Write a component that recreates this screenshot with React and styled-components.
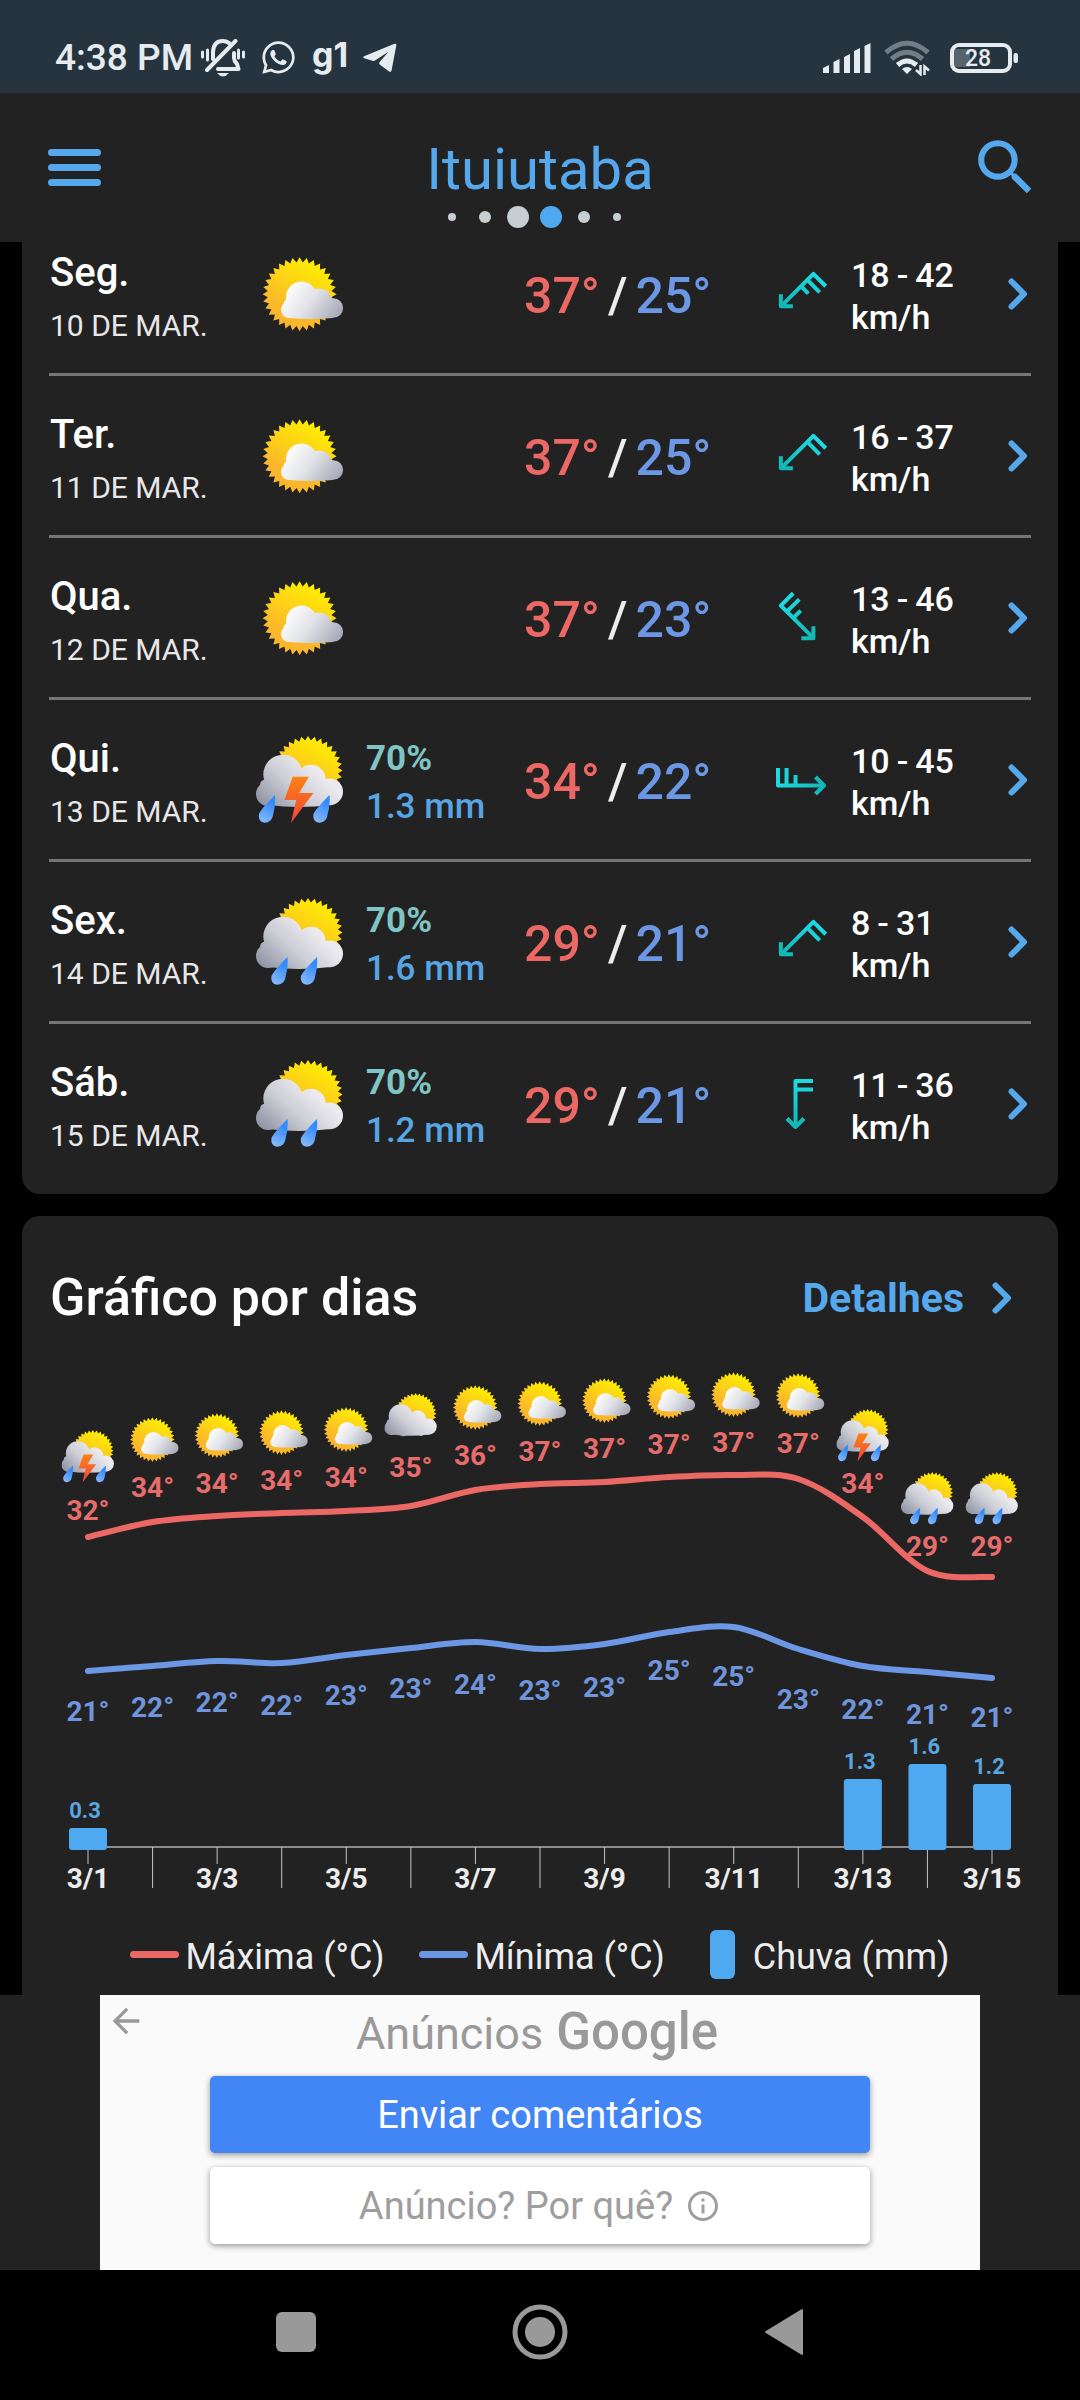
import React from 'react';
import styled, { createGlobalStyle } from 'styled-components';
import { FaWhatsapp } from 'react-icons/fa';
import { MdSearch, MdArrowBack, MdInfoOutline } from 'react-icons/md';

const GlobalStyle = createGlobalStyle`
  * {
    box-sizing: border-box;
  }

  body {
    margin: 0;
    background: #000;
    color: #fff;
    font-family: Roboto, 'Liberation Sans', sans-serif;
  }

  h1, h2, p, ul {
    margin: 0;
    padding: 0;
  }

  button {
    border: 0;
    padding: 0;
    background: none;
    font: inherit;
    color: inherit;
    cursor: pointer;
  }

  a {
    color: inherit;
    text-decoration: none;
  }

  svg {
    display: block;
    flex-shrink: 0;
  }
`;

const BLUE = '#55a8ec';
const RED = '#ec6864';
const INDIGO = '#6c97e4';

const Screen = styled.div`
  display: flex;
  flex-direction: column;
  height: 100vh;
`;

/* ---------- status bar ---------- */

const StatusBar = styled.div`
  display: flex;
  align-items: center;
  justify-content: space-between;
  height: 93px;
  padding: 22px 62px 0 55px;
  background: #26343f;
  color: #e6ebef;
`;

const StatusGroup = styled.div`
  display: flex;
  align-items: center;
  gap: ${({ $gap }) => $gap}px;
`;

const Clock = styled.span`
  font-size: 37px;
  font-weight: 500;
  line-height: 42px;
`;

const NewsBadge = styled.span`
  font-family: Inter, Roboto, sans-serif;
  font-size: 34px;
  font-weight: 700;
  line-height: 32px;
  padding-bottom: 6px;
`;

/* ---------- header ---------- */

const Header = styled.header`
  display: grid;
  grid-template-columns: 1fr auto 1fr;
  align-items: center;
  height: 149px;
  padding: 0 38px;
  background: #222;
  color: ${BLUE};
`;

const MenuButton = styled.button`
  display: flex;
  flex-direction: column;
  justify-self: start;
  gap: 8px;
  padding: 0 10px;
`;

const MenuLine = styled.span`
  width: 53px;
  height: 7px;
  border-radius: 4px;
  background: ${BLUE};
`;

const City = styled.div`
  display: flex;
  flex-direction: column;
  align-items: center;
  gap: 3px;
  padding-top: 28px;
`;

const CityName = styled.h1`
  font-size: 58px;
  font-weight: 400;
  line-height: 68px;
`;

const Dots = styled.div`
  display: flex;
  align-items: center;
  height: 22px;
  padding-right: 10px;
`;

const DotSlot = styled.span`
  display: flex;
  justify-content: center;
  width: 33px;
`;

const Dot = styled.span`
  width: ${({ $size }) => $size}px;
  height: ${({ $size }) => $size}px;
  border-radius: 50%;
  background: ${({ $active }) => ($active ? '#4fa9f0' : '#c7ced2')};
`;

const SearchButton = styled.button`
  justify-self: end;
`;

/* ---------- content ---------- */

const Content = styled.main`
  flex: 1;
  min-height: 0;
  padding: 0 22px;
  overflow-y: auto;
  scrollbar-width: none;
`;

const Card = styled.section`
  padding: 0 27px;
  border-radius: 18px;
  background: #222;
`;

/* the list is scrolled a little under the header */
const DaysCard = styled(Card)`
  margin-top: -28px;
  padding-bottom: 11px;
`;

const DayList = styled.ul`
  list-style: none;
`;

const DayItem = styled.li`
  border-bottom: 3px solid #757575;

  &:last-child {
    border-bottom: 0;
  }
`;

const DayRow = styled.a`
  display: grid;
  grid-template-columns: 206px 110px 158px 1fr 75px 157px 20px;
  align-items: center;
  height: 159px;
  padding: 0 3px 0 1px;
`;

const Cell = styled.div`
  padding-top: 6px;
`;

const DayName = styled.p`
  font-size: 40px;
  font-weight: 500;
  line-height: 50px;
  margin-bottom: 8px;
`;

const DayDate = styled.p`
  font-size: 30px;
  line-height: 40px;
  color: #e8e8e8;
`;

const Rain = styled.p`
  font-size: 35px;
  font-weight: ${({ $bold }) => ($bold ? 700 : 500)};
  line-height: 48px;
  color: ${({ $color }) => $color};
`;

const Temps = styled(Cell)`
  display: flex;
  gap: 8px;
  font-size: 50px;
  font-weight: 500;
  line-height: 61px;
  color: #ededed;
`;

const Temp = styled.span`
  color: ${({ $color }) => $color};
`;

const Wind = styled.div`
  padding-top: 4px;
  font-size: 34px;
  font-weight: 500;
  line-height: 42px;
`;

const WindRange = styled.p`
  display: flex;
  gap: 7px;
`;

/* ---------- chart ---------- */

const ChartCard = styled(Card)`
  margin-top: 22px;
  padding-top: 51px;
  padding-bottom: 51px;
`;

const ChartHeader = styled.div`
  display: flex;
  align-items: center;
  justify-content: space-between;
  padding: 0 19px 0 1px;
`;

const ChartTitle = styled.h2`
  font-size: 52px;
  font-weight: 500;
  line-height: 61px;
`;

const Details = styled.a`
  display: flex;
  align-items: center;
  gap: 28px;
  font-size: 41px;
  font-weight: 700;
  line-height: 46px;
  color: ${BLUE};
`;

const ChartSvg = styled.svg`
  width: 100%;
  font-weight: 700;
`;

const Legend = styled.div`
  display: flex;
  align-items: center;
  justify-content: center;
  gap: 35px;
  margin-top: 30px;
`;

const LegendItem = styled.div`
  display: flex;
  align-items: center;
  gap: ${({ $gap }) => $gap}px;
`;

const LegendText = styled.span`
  padding-top: 6px;
  font-size: 36px;
  line-height: 43px;
  color: #ededed;
`;

const LegendLine = styled.span`
  width: 49px;
  height: 7px;
  border-radius: 4px;
  background: ${({ $color }) => $color};
`;

const LegendBar = styled.span`
  width: 25px;
  height: 49px;
  margin-left: 10px;
  border-radius: 6px;
  background: #4fa9f0;
`;

/* ---------- ad ---------- */

const AdStrip = styled.aside`
  display: flex;
  justify-content: center;
  background: #222;
`;

const Ad = styled.div`
  display: grid;
  grid-template-columns: 110px 660px 110px;
  align-items: start;
  height: 275px;
  background: #fafafa;
  color: #999;
`;

const AdBack = styled.button`
  justify-self: start;
  padding: 6px;
`;

const AdBody = styled.div`
  display: flex;
  flex-direction: column;
  gap: 14px;
`;

const AdTitle = styled.p`
  display: flex;
  align-items: baseline;
  justify-content: center;
  gap: 13px;
  height: 67px;
  padding-right: 6px;
  font-size: 45px;
  line-height: 74px;
`;

const AdBrand = styled.span`
  font-size: 51px;
  font-weight: 500;
`;

const AdButton = styled.button`
  display: flex;
  align-items: center;
  justify-content: center;
  gap: 12px;
  height: 77px;
  border-radius: 5px;
  font-size: 38px;
  background: ${({ $primary }) => ($primary ? '#4285f4' : '#fff')};
  color: ${({ $primary }) => ($primary ? '#fff' : '#9e9e9e')};
  box-shadow: 0 2px 6px rgba(0, 0, 0, 0.4);
`;

/* ---------- system nav ---------- */

const NavBar = styled.nav`
  display: flex;
  align-items: center;
  justify-content: center;
  gap: 188px;
  height: 130px;
  padding-bottom: 6px;
  background: #000;
`;

/* ---------- icons ---------- */

function spikes(cx, cy, outer, inner, count) {
  const points = [];
  for (let i = 0; i < count * 2; i += 1) {
    const r = i % 2 ? inner : outer;
    const a = (Math.PI * i) / count - Math.PI / 2;
    points.push(`${(cx + r * Math.cos(a)).toFixed(1)},${(cy + r * Math.sin(a)).toFixed(1)}`);
  }
  return points.join(' ');
}

function IconGradients() {
  return (
    <svg width="0" height="0" aria-hidden="true">
      <defs>
        <linearGradient id="sun" x1="0.75" y1="0.05" x2="0.4" y2="0.75">
          <stop offset="0" stopColor="#fff000" />
          <stop offset="1" stopColor="#fab72b" />
        </linearGradient>
        <linearGradient id="cloudLight" gradientUnits="userSpaceOnUse" x1="36" y1="38" x2="82" y2="70">
          <stop offset="0" stopColor="#fafafa" />
          <stop offset="0.4" stopColor="#e2e3e8" />
          <stop offset="1" stopColor="#a3a7b5" />
        </linearGradient>
        <linearGradient id="cloudDark" gradientUnits="userSpaceOnUse" x1="56" y1="30" x2="14" y2="76">
          <stop offset="0" stopColor="#ebebef" />
          <stop offset="0.45" stopColor="#cdced6" />
          <stop offset="1" stopColor="#8f94a4" />
        </linearGradient>
        <linearGradient id="drop" x1="0.6" y1="0.2" x2="0.3" y2="1">
          <stop offset="0" stopColor="#338bfb" />
          <stop offset="1" stopColor="#86b9fb" />
        </linearGradient>
        <linearGradient id="bolt" x1="0.5" y1="0" x2="0.5" y2="1">
          <stop offset="0" stopColor="#fb8312" />
          <stop offset="1" stopColor="#f5413c" />
        </linearGradient>
        <linearGradient id="wind" gradientUnits="userSpaceOnUse" x1="0" y1="0" x2="0" y2="50">
          <stop offset="0" stopColor="#1ddbe4" />
          <stop offset="1" stopColor="#12b5b4" />
        </linearGradient>
      </defs>
    </svg>
  );
}

function Drop({ x }) {
  // tip at (x, 59)
  return (
    <path
      d={`M${x} 59 Q${x - 14} 73 ${x - 16} 78 C${x - 18} 90 ${x - 3} 89 ${x - 2} 79 Q${x + 1} 68 ${x} 59 Z`}
      fill="url(#drop)"
    />
  );
}

function WeatherIcon({ type, size = 88, ...rest }) {
  if (type === 'sun') {
    return (
      <svg viewBox="0 0 88 88" width={size} height={size} {...rest}>
        <polygon points={spikes(43.6, 44.2, 37, 32, 32)} fill="url(#sun)" />
        <g fill="url(#cloudLight)">
          <path d="M33 52 H77 V68 Q55 70 33 68 Z" />
          <circle cx="45.5" cy="47" r="15.5" />
          <circle cx="63" cy="51.5" r="13" />
          <circle cx="77.3" cy="58" r="9.8" />
          <circle cx="33" cy="60" r="8" />
          <circle cx="32" cy="54" r="4.5" />
        </g>
      </svg>
    );
  }
  return (
    <svg viewBox="0 0 88 88" width={size} height={size} {...rest}>
      <polygon points={spikes(52, 34.5, 34.5, 30, 32)} fill="url(#sun)" />
      <g fill="url(#cloudDark)">
        <path d="M12 44 H74 V69 Q43 73 12 69 Z" />
        <circle cx="27" cy="38.5" r="19.7" />
        <circle cx="55" cy="43.4" r="14.7" />
        <circle cx="73.6" cy="55.8" r="13.4" />
        <circle cx="12" cy="58" r="12" />
        <circle cx="9.5" cy="49" r="5.5" />
      </g>
      {type === 'cloud' && (
        <g fill="url(#cloudDark)">
          <circle cx="32" cy="64" r="8" />
          <circle cx="61" cy="64" r="7" />
        </g>
      )}
      {type === 'storm' && (
        <>
          <Drop x={19} />
          <Drop x={73.5} />
          <path d="M36.7 40.7 H53 L43 57 H57.4 L35 87 L40.1 64 H28.4 Z" fill="url(#bolt)" />
        </>
      )}
      {type === 'rain' && (
        <>
          <Drop x={31.5} />
          <Drop x={61} />
        </>
      )}
    </svg>
  );
}

function WindIcon({ angle, barbs }) {
  return (
    <svg viewBox="0 0 50 50" width="50" height="50" overflow="visible">
      <g
        transform={`rotate(${angle} 25 25)`}
        fill="none"
        stroke="url(#wind)"
        strokeWidth="4"
        strokeLinejoin="round"
      >
        <path d="M37 2 H19.5 L19.6 48" />
        <path d="M11 39.5 L19.5 48 L28 39.5" />
        <path d="M19.5 10.5 L37 10.6" />
        {barbs > 2 && <path d="M19.5 19.5 L30 19.6" />}
      </g>
    </svg>
  );
}

function Chevron() {
  return (
    <svg viewBox="0 0 20 32" width="20" height="32">
      <path
        d="M3.5 3.5 L16 16 L3.5 28.5"
        fill="none"
        stroke={BLUE}
        strokeWidth="6"
        strokeLinecap="round"
        strokeLinejoin="round"
      />
    </svg>
  );
}

function MutedBell() {
  return (
    <svg viewBox="0 0 44 38" width="44" height="38" fill="none" stroke="currentColor">
      <path
        d="M12 20 V13 Q12.500 2 22 2 Q25 2 28 4 M33 14 V19 Q33 22 36 25 L37.500 30 H17"
        strokeWidth="4"
        strokeLinecap="round"
        strokeLinejoin="round"
      />
      <path d="M6 31 L34.500 2" strokeWidth="4" strokeLinecap="round" />
      <path d="M1.500 13 V18 M6.500 11 V21 M37.500 11 V19 M42.500 13 V18" strokeWidth="3" strokeLinecap="round" />
      <path d="M16 34 H28 Q22 41 16 34 Z" fill="currentColor" stroke="none" />
    </svg>
  );
}

function Plane() {
  return (
    <svg viewBox="0 0 34 30" width="34" height="30" fill="currentColor">
      <path d="M1 13.200 L31.500 0.800 Q33.600 0.300 33.300 2.400 L28.600 27.200 Q28 29.600 25.800 28.200 L17 21.800 Q15.400 20.400 16.800 18.800 L25.500 8.800 L12 17.400 Q10.800 18.200 9.400 17.800 L1.200 15.300 Q-0.600 14.300 1 13.200 Z" />
    </svg>
  );
}

function Signal() {
  return (
    <svg viewBox="0 0 48 32" width="48" height="32" fill="currentColor">
      <path d="M0 31 V26 L6 23 V31 Z M10.500 31 V20 L16.500 17 V31 Z M21 31 V15 L27 12 V31 Z M31 31 V9 L37 6 V31 Z M41.500 31 V4 L47.500 1 V31 Z" />
    </svg>
  );
}

function Wifi() {
  return (
    <svg viewBox="0 0 46 36" width="46" height="36" fill="none" stroke="currentColor" strokeWidth="5">
      <path d="M2 12.500 Q23 -6 44 12.500" opacity="0.4" />
      <path d="M7.500 19 Q23 5.500 38.500 19" opacity="0.4" />
      <path d="M13.500 25 Q23 17 32.500 25" />
      <path d="M18 29 Q23 25 28 29 L23 34 Z" fill="currentColor" stroke="none" />
      <path d="M36.500 25 V34 L32 30 M40.500 35 V26.500 L45 30.500" strokeWidth="2.500" />
    </svg>
  );
}

function Battery() {
  return (
    <svg viewBox="0 0 68 32" width="68" height="32">
      <rect x="4" y="7" width="16" height="18" fill="#58646d" />
      <rect x="2" y="3" width="58" height="26" rx="7" fill="none" stroke="currentColor" strokeWidth="4" />
      <rect x="63.500" y="11" width="4.500" height="10" rx="2" fill="currentColor" />
      <text x="28" y="24" textAnchor="middle" fontSize="23" fontWeight="500" fill="currentColor">
        28
      </text>
    </svg>
  );
}

/* ---------- data ---------- */

const DAYS = [
  { name: 'Seg.', date: '10 DE MAR.', icon: 'sun', max: 37, min: 25, wind: [18, 42], angle: 45, barbs: 3 },
  { name: 'Ter.', date: '11 DE MAR.', icon: 'sun', max: 37, min: 25, wind: [16, 37], angle: 45, barbs: 2 },
  { name: 'Qua.', date: '12 DE MAR.', icon: 'sun', max: 37, min: 23, wind: [13, 46], angle: -45, barbs: 3 },
  { name: 'Qui.', date: '13 DE MAR.', icon: 'storm', chance: '70%', rain: '1.3 mm', max: 34, min: 22, wind: [10, 45], angle: -90, barbs: 3 },
  { name: 'Sex.', date: '14 DE MAR.', icon: 'rain', chance: '70%', rain: '1.6 mm', max: 29, min: 21, wind: [8, 31], angle: 45, barbs: 2 },
  { name: 'Sáb.', date: '15 DE MAR.', icon: 'rain', chance: '70%', rain: '1.2 mm', max: 29, min: 21, wind: [11, 36], angle: 0, barbs: 2 },
];

// maxY / minY: curve heights, maxLabel / minLabel: text baselines
const POINTS = [
  { icon: 'storm', max: 32, maxY: 209, maxLabel: 192, min: 21, minY: 343, minLabel: 393, rain: '0.3', rainY: 500 },
  { icon: 'sun', max: 34, maxY: 194, maxLabel: 169, min: 22, minY: 338, minLabel: 389 },
  { icon: 'sun', max: 34, maxY: 188, maxLabel: 165, min: 22, minY: 333, minLabel: 384 },
  { icon: 'sun', max: 34, maxY: 185, maxLabel: 162, min: 22, minY: 335, minLabel: 387 },
  { icon: 'sun', max: 34, maxY: 183, maxLabel: 159, min: 23, minY: 327, minLabel: 377 },
  { icon: 'cloud', max: 35, maxY: 178, maxLabel: 149, min: 23, minY: 320, minLabel: 370 },
  { icon: 'sun', max: 36, maxY: 162, maxLabel: 137, min: 24, minY: 314, minLabel: 366 },
  { icon: 'sun', max: 37, maxY: 156, maxLabel: 133, min: 23, minY: 321, minLabel: 372 },
  { icon: 'sun', max: 37, maxY: 154, maxLabel: 130, min: 23, minY: 316, minLabel: 369 },
  { icon: 'sun', max: 37, maxY: 149, maxLabel: 126, min: 25, minY: 304, minLabel: 352 },
  { icon: 'sun', max: 37, maxY: 147, maxLabel: 124, min: 25, minY: 299, minLabel: 358 },
  { icon: 'sun', max: 37, maxY: 151, maxLabel: 125, min: 23, minY: 321, minLabel: 381 },
  { icon: 'storm', max: 34, maxY: 189, maxLabel: 165, min: 22, minY: 338, minLabel: 391, rain: '1.3', rainY: 451 },
  { icon: 'rain', max: 29, maxY: 243, maxLabel: 228, min: 21, minY: 344, minLabel: 396, rain: '1.6', rainY: 436 },
  { icon: 'rain', max: 29, maxY: 249, maxLabel: 228, min: 21, minY: 350, minLabel: 399, rain: '1.2', rainY: 456 },
];

const FIRST_X = 39;
const STEP = 904 / 14;
const AXIS_Y = 519;
const ICON = 53;

const columnX = (i) => FIRST_X + i * STEP;

function smoothPath(ys) {
  const p = ys.map((y, i) => [columnX(i), y]);
  let d = `M${p[0][0]} ${p[0][1]}`;
  for (let i = 0; i < p.length - 1; i += 1) {
    const a = p[i - 1] || p[i];
    const b = p[i];
    const c = p[i + 1];
    const e = p[i + 2] || c;
    d += ` C${b[0] + (c[0] - a[0]) / 6} ${b[1] + (c[1] - a[1]) / 6}`;
    d += ` ${c[0] - (e[0] - b[0]) / 6} ${c[1] - (e[1] - b[1]) / 6} ${c[0]} ${c[1]}`;
  }
  return d;
}

function DaysChart() {
  return (
    <ChartSvg viewBox="0 0 982 572" role="img" aria-label="Gráfico por dias">
      <line x1={FIRST_X} y1={AXIS_Y} x2={columnX(14)} y2={AXIS_Y} stroke="#8c8c8c" strokeWidth="2" />
      {POINTS.map((point, i) => (
        <React.Fragment key={i}>
          <line
            x1={columnX(i)}
            y1={AXIS_Y}
            x2={columnX(i)}
            y2={i % 2 ? 560 : 536}
            stroke="#c4c4c4"
            strokeWidth="1"
          />
          {i % 2 === 0 && (
            <text x={columnX(i)} y="560" textAnchor="middle" fontSize="28" fill="#ededed">
              {`3/${i + 1}`}
            </text>
          )}
          {point.rain && (
            <>
              <rect x={columnX(i) - 19} y={point.rainY} width="38" height={522 - point.rainY} rx="3" fill="#4fa9f0" />
              <text x={columnX(i) - 3} y={point.rainY - 10} textAnchor="middle" fontSize="22" fill="#5aa6e0">
                {point.rain}
              </text>
            </>
          )}
        </React.Fragment>
      ))}
      <g fill="none" strokeWidth="6" strokeLinecap="round">
        <path d={smoothPath(POINTS.map((p) => p.maxY))} stroke={RED} />
        <path d={smoothPath(POINTS.map((p) => p.minY))} stroke={INDIGO} />
      </g>
      {POINTS.map((point, i) => (
        <React.Fragment key={i}>
          <WeatherIcon
            type={point.icon}
            size={ICON}
            x={columnX(i) - ICON / 2}
            y={point.maxLabel - (i === 0 ? 90 : 84)}
          />
          <text x={columnX(i)} y={point.maxLabel} textAnchor="middle" fontSize="28" fill="#e66d6b">
            {point.max}°
          </text>
          <text x={columnX(i)} y={point.minLabel} textAnchor="middle" fontSize="28" fill="#7095dc">
            {point.min}°
          </text>
        </React.Fragment>
      ))}
    </ChartSvg>
  );
}

function Day({ day }) {
  return (
    <DayItem>
      <DayRow href="#">
        <Cell>
          <DayName>{day.name}</DayName>
          <DayDate>{day.date}</DayDate>
        </Cell>
        <WeatherIcon type={day.icon} />
        <Cell>
          {day.chance && (
            <>
              <Rain $bold $color="#80c5c5">{day.chance}</Rain>
              <Rain $color="#58a5e4">{day.rain}</Rain>
            </>
          )}
        </Cell>
        <Temps>
          <Temp $color={RED}>{day.max}°</Temp>
          <span>/</span>
          <Temp $color={INDIGO}>{day.min}°</Temp>
        </Temps>
        <WindIcon angle={day.angle} barbs={day.barbs} />
        <Wind>
          <WindRange>
            <span>{day.wind[0]}</span>
            <span>-</span>
            <span>{day.wind[1]}</span>
          </WindRange>
          <p>km/h</p>
        </Wind>
        <Chevron />
      </DayRow>
    </DayItem>
  );
}

export default function App() {
  return (
    <Screen>
      <GlobalStyle />
      <IconGradients />
      <StatusBar>
        <StatusGroup $gap={15}>
          <StatusGroup $gap={8}>
            <Clock>4:38 PM</Clock>
            <MutedBell />
          </StatusGroup>
          <FaWhatsapp size={37} />
          <NewsBadge>g1</NewsBadge>
          <Plane />
        </StatusGroup>
        <StatusGroup $gap={20}>
          <StatusGroup $gap={13}>
            <Signal />
            <Wifi />
          </StatusGroup>
          <Battery />
        </StatusGroup>
      </StatusBar>

      <Header>
        <MenuButton aria-label="Menu">
          <MenuLine />
          <MenuLine />
          <MenuLine />
        </MenuButton>
        <City>
          <CityName>Ituiutaba</CityName>
          <Dots>
            {[8, 12, 22, 22, 12, 8].map((size, i) => (
              <DotSlot key={i}>
                <Dot $size={size} $active={i === 3} />
              </DotSlot>
            ))}
          </Dots>
        </City>
        <SearchButton aria-label="Buscar">
          <MdSearch size={73} />
        </SearchButton>
      </Header>

      <Content>
        <DaysCard>
          <DayList>
            {DAYS.map((day) => (
              <Day key={day.date} day={day} />
            ))}
          </DayList>
        </DaysCard>

        <ChartCard>
          <ChartHeader>
            <ChartTitle>Gráfico por dias</ChartTitle>
            <Details href="#">
              Detalhes
              <Chevron />
            </Details>
          </ChartHeader>
          <DaysChart />
          <Legend>
            <LegendItem $gap={6}>
              <LegendLine $color={RED} />
              <LegendText>Máxima (°C)</LegendText>
            </LegendItem>
            <LegendItem $gap={6}>
              <LegendLine $color={INDIGO} />
              <LegendText>Mínima (°C)</LegendText>
            </LegendItem>
            <LegendItem $gap={18}>
              <LegendBar />
              <LegendText>Chuva (mm)</LegendText>
            </LegendItem>
          </Legend>
        </ChartCard>
      </Content>

      <AdStrip>
        <Ad>
          <AdBack aria-label="Voltar">
            <MdArrowBack size={40} />
          </AdBack>
          <AdBody>
            <AdTitle>
              Anúncios <AdBrand>Google</AdBrand>
            </AdTitle>
            <AdButton $primary>Enviar comentários</AdButton>
            <AdButton>
              Anúncio? Por quê?
              <MdInfoOutline size={36} />
            </AdButton>
          </AdBody>
        </Ad>
      </AdStrip>

      <NavBar>
        <button aria-label="Recentes">
          <svg viewBox="0 0 56 56" width="56" height="56">
            <rect x="8" y="8" width="40" height="40" rx="6" fill="#999" />
          </svg>
        </button>
        <button aria-label="Início">
          <svg viewBox="0 0 56 56" width="56" height="56">
            <circle cx="28" cy="28" r="25" fill="none" stroke="#999" strokeWidth="5" />
            <circle cx="28" cy="28" r="15" fill="#999" />
          </svg>
        </button>
        <button aria-label="Voltar">
          <svg viewBox="0 0 56 56" width="56" height="56">
            <path d="M10 28 L46 6 V50 Z" fill="#999" stroke="#999" strokeWidth="2" strokeLinejoin="round" />
          </svg>
        </button>
      </NavBar>
    </Screen>
  );
}
